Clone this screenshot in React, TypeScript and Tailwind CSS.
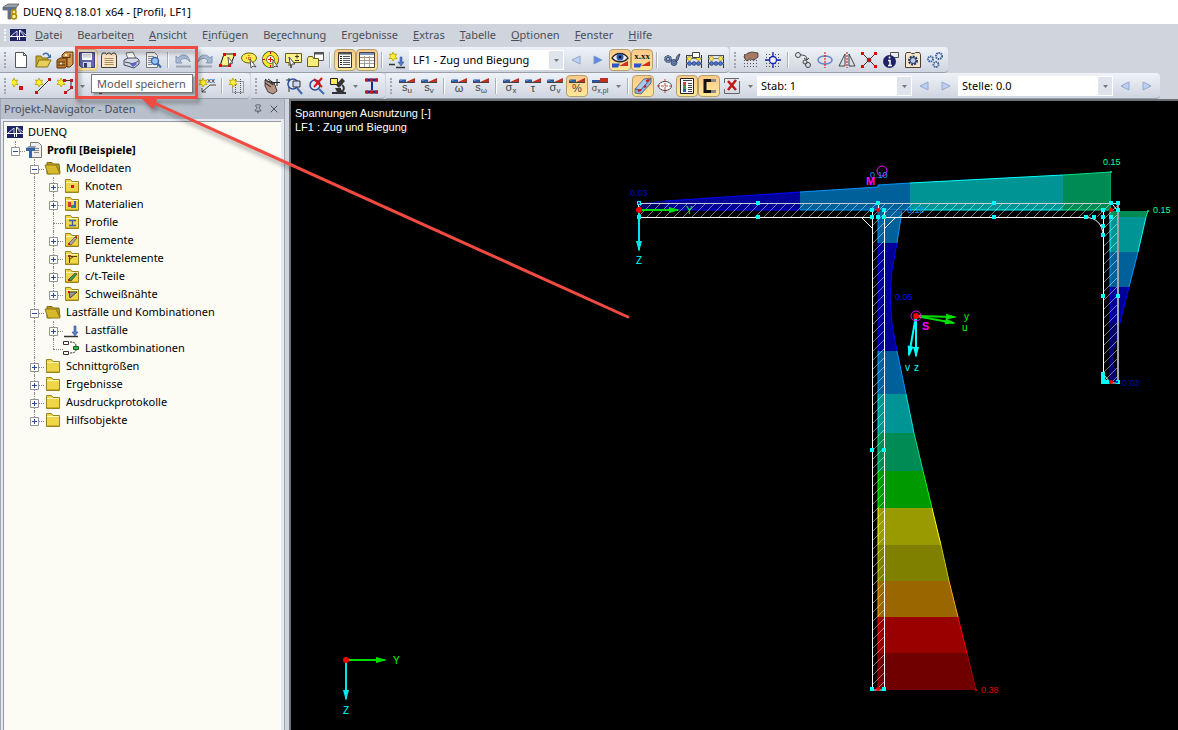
import React from 'react';
import { Pin, X } from 'lucide-react';

const gold = '#efd548';

const spark = (
  <g stroke="#b8a000" fill="#ffee33">
    <path d="M5 1l1 2.5L8.500 3 7.500 5.500 9 7.500 6.500 7.500 5 10 4 7.500 1 7.500 2.500 5.500 1.500 3 4 3.500z" strokeWidth=".8" />
  </g>
);

const slopes = (
  <>
    <path d="M1 2.500h7v3z" fill="#2b57a5" />
    <path d="M1 5.500V3l9 2.500z" fill="#2b57a5" />
    <path d="M7 5.500L17 1v4.500z" fill="#c03020" />
    <path d="M1 5.500h16" stroke="#444" />
  </>
);

function slopeText(text: string) {
  return (
    <>
      {slopes}
      <text x="9" y="15" fontSize="11" textAnchor="middle" fill="#444" fontFamily="Liberation Sans, sans-serif">{text}</text>
    </>
  );
}

function slopeSub(text: string, sub: string) {
  return (
    <>
      {slopes}
      <text x="9" y="14" fontSize="11" textAnchor="middle" fill="#444" fontFamily="Liberation Sans, sans-serif">
        {text}<tspan fontSize="8" dy="2">{sub}</tspan>
      </text>
    </>
  );
}

const dotGrid = (
  <path d="M2 3.500h15M2 6.500h15M2 9.500h15M2 12.500h15M2 15.500h15" stroke="#555" strokeDasharray="1 2" />
);

const beads = (
  <>
    <path d="M1.500 4v13M16.500 4v13" stroke="#333" />
    <path d="M1 7.500h16M1 12.500h16" stroke="#777" />
    <g stroke="#8a7a10" strokeWidth=".5" fill="#ffe84a"><circle cx="4.500" cy="7.500" r="2" /><circle cx="13.500" cy="7.500" r="2" /></g>
    <g stroke="#124" strokeWidth=".5" fill="#4a72d8"><circle cx="4.500" cy="12.500" r="2" /><circle cx="9" cy="12.500" r="2" /><circle cx="13.500" cy="12.500" r="2" /></g>
  </>
);

const icons: Record<string, React.ReactNode> = {
  new: <path d="M3.500 1.500h8l3 3v12h-11z M11.500 1.500v3h3" fill="#fff" stroke="#555" />,
  open: (
    <>
      <path d="M2 16V5h5l1.500 2H14v3" fill="#c8a930" stroke="#84701a" />
      <path d="M2 16l3-7h12l-3.500 7z" fill="#e8cf58" stroke="#84701a" />
      <path d="M9 4c2-3 5-2 6 1" fill="none" stroke="#3b6ea5" strokeWidth="1.500" /><path d="M17 3v4h-4z" fill="#3b6ea5" />
    </>
  ),
  cabinet: (
    <>
      <path d="M1 9l3-2h7v8l-2 2H1z" fill="#b9772c" stroke="#5a3510" />
      <path d="M6 4l3-3h8v12l-3 3h-3V7l-5-1z" fill="#d79a4a" stroke="#5a3510" />
      <path d="M2 11h7M2 14h7M6 6.500h8V3" fill="none" stroke="#5a3510" /><circle cx="5" cy="12.500" r="1" fill="#fff" /><circle cx="10" cy="4" r="1" fill="#fff" />
    </>
  ),
  save: (
    <>
      <path d="M1.500 1.500h15v15h-13l-2-2z" fill="#6468a8" stroke="#3f4380" />
      <path d="M4 2h10v7H4z" fill="#fff" /><path d="M5 4h8M5 6h8" stroke="#b9bccb" />
      <path d="M5 11h8v5.500H5z" fill="#d5d8e6" /><path d="M6 12h3v4.500H6z" fill="#33366b" />
    </>
  ),
  report: (
    <>
      <path d="M1.500 4.500l1-2.500h3l1 1.500L8 2h2l1 1.500L13 2h2l1.500 2.500v12h-15z" fill="#f7e6c8" stroke="#4a3c30" />
      <path d="M4.500 7.500h9M4.500 9.500h9M4.500 11.500h9M4.500 13.500h9" stroke="#b08c5c" />
    </>
  ),
  print: (
    <>
      <path d="M4 2l7-1 3 7H6z" fill="#fff" stroke="#777" />
      <path d="M2 9l4-2h9l2 2v4l-5 4-10-3z" fill="#d6d9e8" stroke="#44485f" />
      <path d="M3 11l9 2 4-3" fill="none" stroke="#44485f" /><path d="M8 13l5-2 2 2-4 3z" fill="#5568c8" />
    </>
  ),
  preview: (
    <>
      <path d="M2.500 1.500h8l3 3v12h-11z" fill="#f4f4f4" stroke="#777" /><path d="M4 5.500h6M4 7.500h6M4 9.500h3M4 11.500h3M4 13.500h4" stroke="#888" />
      <circle cx="11" cy="10" r="3.500" fill="#9cc3ee" stroke="#3c6bb0" strokeWidth="1.500" /><path d="M13.500 12.500l3.500 4" stroke="#3c6bb0" strokeWidth="2" />
    </>
  ),
  undo: <><path d="M4 7c4-5 11-4 12 4-3-4-7-5-10-1l2 2H2V5z" fill="#a6b8d2" stroke="#8598b5" /><path d="M2 15.500h15" stroke="#9ba6b8" strokeWidth="2" /></>,
  redo: <><path d="M14 7C10 2 3 3 2 11c3-4 7-5 10-1l-2 2h6V5z" fill="#a6b8d2" stroke="#8598b5" /><path d="M1 15.500h15" stroke="#9ba6b8" strokeWidth="2" /></>,
  area: <><path d="M6 3h11l-5 12H2z" fill="#faf08c" stroke="#111" /><g fill="#e00"><path d="M5 2h3v3H5zM15 2h3v3h-3zM1 13h3v3H1zM10 13h3v3h-3z" /></g><path d="M10 6l5 6h-3l-1 3z" fill="#fff" stroke="#555" /></>,
  circleArea: <><ellipse cx="9" cy="7" rx="7.500" ry="5" fill="#ffee50" stroke="#665c00" /><path d="M6 7h6M9 4v6" stroke="#e00" strokeDasharray="1 1" /><path d="M10 8l6 8-3-1-2 2z" fill="#fff" stroke="#555" /></>,
  ring: <><circle cx="8.500" cy="8.500" r="6" fill="#fff" stroke="#443f10" strokeWidth="5" /><circle cx="8.500" cy="8.500" r="6" fill="none" stroke="#ffe533" strokeWidth="3.500" /><path d="M6 8.500h5M8.500 6v5M8.500 1v2M1 8.500h2M8.500 14v2" stroke="#e00" /><path d="M11 9l5 7-3-1-2 2z" fill="#fff" stroke="#555" /></>,
  note: <><path d="M1.500 2.500h16v9H8l-3 3v-3H1.500z" fill="#fdf08a" stroke="#665c20" /><path d="M13 3.500v4M11 5.500h4M11 9.500h4" stroke="#333" /><path d="M5 6l6 7H8l-1 4z" fill="#fff" stroke="#444" /></>,
  windows: <><path d="M8.500 1.500h9v8h-9z" fill="#fff" stroke="#555" /><path d="M8 2.500h10" stroke="#555" strokeWidth="2" /><path d="M1.500 7.500l1-2h4l1 2h5v8h-11z" fill="#f7ed78" stroke="#6b5f1e" /></>,
  navigator: <><path d="M2.500 1.500h13v15h-13z" fill="#fff" stroke="#333" /><path d="M2 2.500h14" stroke="#555" strokeWidth="2" /><path d="M7 5.500h7M7 7.500h7M7 9.500h7M7 11.500h7M7 13.500h7" stroke="#555" /><path d="M4 5.500h2M4 7.500h2M4 9.500h2M4 11.500h2M4 13.500h2" stroke="#222" /></>,
  tables: <><path d="M1.500 1.500h15v15h-15z" fill="#fff" stroke="#444" /><path d="M2 3h14" stroke="#7a95c0" strokeWidth="2" /><path d="M2 6.500h14" stroke="#b08c5c" /><path d="M2 9.500h14M2 12.500h14M6.500 5v11M11.500 5v11" stroke="#a0a0a0" /></>,
  newCase: <>{spark}<path d="M8 16.500h9M1 13.500h6" stroke="#333" strokeWidth="1.500" /><path d="M14 6v5h2l-3 4-3-4h2V6z" fill="#5577c8" stroke="#2b4a90" strokeWidth=".5" /></>,
  prev: <path d="M13 5v8L5 9z" fill="#bcd0f6" stroke="#93a8cc" />,
  next: <path d="M5 5v8l8-4z" fill="#bcd0f6" stroke="#93a8cc" />,
  nextBlue: <path d="M5 5v8l8-4z" fill="#5d8ae0" stroke="#7f9bcc" />,
  eye: <><path d="M1 12.500h8l-2 4H1z" fill="#2b57c5" /><path d="M8 15l9-5v5z" fill="#d03020" /><path d="M1 7c4-6 12-6 16 0-4 5-12 5-16 0z" fill="#eef" stroke="#222" strokeWidth="1.300" /><circle cx="9" cy="6" r="3.500" fill="#2a57a8" /><circle cx="9" cy="6" r="1.300" fill="#001" /></>,
  values: <><text x="9" y="8" textAnchor="middle" fontSize="9" fontWeight="bold" fontFamily="Liberation Serif, serif" fill="#111">x.xx</text><path d="M1 12.500h8l-2 4H1z" fill="#2b57c5" /><path d="M8 15l9-5v5z" fill="#d03020" /></>,
  gears: <g fill="#6c86b8" stroke="#25304a" strokeWidth=".8"><circle cx="5" cy="8" r="3.500" strokeDasharray="2 1" /><circle cx="5" cy="8" r="1.500" fill="#dde" /><circle cx="11" cy="11.500" r="3" /><circle cx="11" cy="11.500" r="1" fill="#dde" /><path d="M13 11c0-5 1-7 4-8l-2 6z" /></g>,
  abacusDoc: <>{beads}<path d="M7.500 1.500h7v5h-7z" fill="#fff" stroke="#444" /><path d="M1 4.500h6" stroke="#444" /></>,
  abacus: <>{beads}<path d="M1 4.500h16" stroke="#555" /></>,
  handGrid: <>{dotGrid}<path d="M2 5l4-3 4-1 6 1v4l-4 3-4-1-3 2-2-2z" fill="#a67a62" stroke="#333" strokeWidth=".8" /></>,
  snapGrid: <>{dotGrid}<path d="M9 1v16M1 9h16" stroke="#1522b0" strokeWidth="1.300" /><circle cx="9" cy="9" r="3.500" fill="#eef" stroke="#1522b0" strokeWidth="1.300" /></>,
  moveNode: <g fill="none" stroke="#444"><circle cx="4" cy="4" r="2.500" /><circle cx="14" cy="14" r="2.500" /><circle cx="11" cy="11" r="2" /><path d="M7 4c5 0 6 2 6 5l2-2m-2 2l-3-2" /></g>,
  rotate: <><ellipse cx="9" cy="9" rx="7" ry="4" fill="none" stroke="#6288c8" strokeWidth="1.500" /><path d="M9 1v16" stroke="#d00" strokeDasharray="2 1" /></>,
  mirror: <><path d="M7 3v12H1zM11 3v12h6z" fill="none" stroke="#444" /><path d="M9 1v16" stroke="#d00" strokeDasharray="2 1" /></>,
  cross: <><path d="M2 2l14 14M16 2L2 16" stroke="#333" /><g fill="#e00"><path d="M1 1h3v3H1zM14 1h3v3h-3zM1 14h3v3H1zM14 14h3v3h-3z" /><circle cx="9" cy="9" r="2" stroke="#333" strokeWidth=".6" /></g></>,
  info: <><path d="M8.500 1.500h8v5h-8z" fill="#eee" stroke="#555" /><circle cx="7.500" cy="10.500" r="6.500" fill="#1c2466" /><path d="M6 9.500h2V14M6 14.500h4" fill="none" stroke="#fff" strokeWidth="1.500" /><circle cx="7.500" cy="6.500" r="1" fill="#fff" /></>,
  calcGear: <><path d="M1.500 3.500l1-2h4l1 1h3l1-1h4l1 2v13h-15z" fill="#f7e6c8" stroke="#4a3c30" /><circle cx="9" cy="9.500" r="4" fill="none" stroke="#1f3568" strokeWidth="2" strokeDasharray="2 1" /><circle cx="9" cy="9.500" r="3" fill="#b9cbe8" stroke="#1f3568" /></>,
  cogs: <g fill="#dfe7f4" stroke="#41639c" strokeWidth="2" strokeDasharray="1.500 .7"><circle cx="4.500" cy="8" r="2.500" /><circle cx="13" cy="5" r="3" /><circle cx="10" cy="13.500" r="2.500" /></g>,
  node: <g transform="translate(-3 0)">{spark}<path d="M10 9h4v4h-4z" fill="#c01818" /></g>,
  line: <><path d="M3 15L15 3" stroke="#333" />{spark}<path d="M1 14h3v3H1zM14 1h3v3h-3z" fill="#c01818" /></>,
  poly: <><path d="M6 3.500h9v8l-6 4" stroke="#333" fill="none" />{spark}<path d="M14 2h3v3h-3zM14 9h3v3h-3zM8 14h3v3H8zM7 2h3v3H7z" fill="#c01818" /></>,
  profileNew: <><path d="M3 15V5h12" fill="none" stroke="#333" />{spark}<path d="M12 12h4v4h-4z" fill="#1b2a90" /></>,
  support: <><path d="M3 15h13M5 15l4-9 4 9" fill="none" stroke="#333" /><path d="M7 12h4v4H7z" fill="#1b2a90" /></>,
  dimension: <><path d="M4 15l8-7h6M4 15v-4M4 15h4" stroke="#444" fill="none" />{spark}<text x="9" y="6" fontSize="8" fill="#222" fontFamily="Liberation Sans, sans-serif">xx</text></>,
  dottedFrame: <><path d="M4.500 4.500h11v11h-11zM7.500 2v15M12.500 2v15" fill="none" stroke="#555" strokeDasharray="1 1" />{spark}</>,
  pan: <><path d="M2 3l3 2 1-1 6 4 2 6-4 3-5-2-3-6z" fill="#b59482" stroke="#222" strokeWidth=".8" /><path d="M2 2l8 6M5 2l7 5M2 6l6 4M8 5.500h9M14 2v7" stroke="#222" /></>,
  zoomWin: <><path d="M1 3h7M4 1v14" stroke="#333" /><circle cx="8" cy="7" r="5" fill="#dce9ff" stroke="#2a4a98" strokeWidth="1.500" /><path d="M8 4h7v6H8z" fill="#cdd8f0" stroke="#333" /><path d="M12 11l5 6" stroke="#3c6bb0" strokeWidth="2" /></>,
  zoomOff: <><circle cx="8" cy="8" r="5" fill="#dce9ff" stroke="#2a4a98" strokeWidth="1.500" /><path d="M12 12l5 5" stroke="#3c6bb0" strokeWidth="2" /><path d="M7 2l8 8M15 1l-8 9" stroke="#d01818" strokeWidth="2" /></>,
  microscope: <><path d="M1.500 1.500h7v6h-7z" fill="#ffee50" stroke="#222" /><path d="M13 1l3 3-6 7-3-3zM3 15h14v2H3zM6 11h6v1l2 3H8z" fill="#333" /><path d="M13 8c3 2 2 5 0 7" fill="none" stroke="#333" strokeWidth="2" /></>,
  iProfile: <><path d="M3 3h12M3 15h12" stroke="#1b2a90" strokeWidth="3" /><path d="M2 3h14M2 15h14" stroke="#c01818" strokeWidth="3" strokeDasharray="3 2" /><path d="M8 5h2v8H8z" fill="#1b2a90" /></>,
  su: slopeSub('s', 'u'),
  sv: slopeSub('s', 'v'),
  omega: slopeText('ω'),
  somega: slopeSub('s', 'ω'),
  sigmaX: slopeSub('σ', 'x'),
  tau: slopeText('τ'),
  sigmaV: slopeSub('σ', 'v'),
  percent: slopeText('%'),
  sigmaPl: (
    <>
      <path d="M1 3h8v3H1z" fill="#2b57a5" /><path d="M9 1h8v4H9z" fill="#c03020" /><path d="M1 5.500h16" stroke="#444" />
      <text x="9" y="14" fontSize="9" textAnchor="middle" fill="#444" fontFamily="Liberation Sans, sans-serif">σ<tspan fontSize="7" dy="2">x,pl</tspan></text>
    </>
  ),
  section: <><path d="M1 12L10 2l7-1-10 12z" fill="#a8c8ef" stroke="#456" strokeWidth=".8" /><path d="M1 12l6 1L17 1v5L7 17l-6-1z" fill="#8db2e4" stroke="#456" strokeWidth=".8" /><path d="M4 14l3-1M12 4l3-1M10 10l2-1" stroke="#d01818" strokeWidth="2" /></>,
  ellipse: <><ellipse cx="9" cy="9" rx="6.500" ry="4.500" fill="#fff" stroke="#444" /><path d="M9 2v14M1 9h16" stroke="#b44" strokeDasharray="3 1" /></>,
  legend: <><path d="M2.500 1.500h13v15h-13z" fill="#fff" stroke="#222" /><path d="M5 5h3v3H5z" fill="#e04030" /><path d="M5 8h3v4H5z" fill="#3c9a46" /><path d="M5 12h3v3H5z" fill="#2b57c5" /><path d="M5 3.500h9M10 6.500h4M10 8.500h4M10 10.500h4M10 12.500h4M10 14.500h4" stroke="#444" /></>,
  cShape: <><path d="M11 3.500H5v11h6" fill="none" stroke="#111" strokeWidth="3" /><path d="M11 3.500h5M11 14.500h5" stroke="#888" strokeWidth="3" /></>,
  clear: <><path d="M1.500 6V1.500H16M1.500 12v4.500H16.500V4" fill="none" stroke="#666" /><path d="M5 4l8 9M13 3L5 13" stroke="#c01818" strokeWidth="2.500" /></>,
};

function Tool({ icon, label, active, hover, wide }: { icon: string; label: string; active?: boolean; hover?: boolean; wide?: boolean }) {
  let look = 'border-transparent';
  if (active) look = 'border-[#b5a06a] bg-gradient-to-b from-[#ffc98a] to-[#ffe89a]';
  if (hover) look = 'border-[#d8c48c] bg-gradient-to-b from-[#fdf6e4] to-[#fbe08a]';
  return (
    <button type="button" aria-label={label} className={`flex h-[22px] shrink-0 items-center justify-center rounded-sm border ${wide ? 'w-6' : 'w-[22px]'} ${look}`}>
      <svg viewBox="0 0 18 18" className="h-[18px] w-[18px] shrink-0">{icons[icon]}</svg>
    </button>
  );
}

function Drop({ label }: { label: string }) {
  return (
    <button type="button" aria-label={label} className="flex h-[22px] w-3 shrink-0 items-center justify-center">
      <svg viewBox="0 0 5 3" className="h-[3px] w-[5px]"><path d="M0 0h5L2.500 3z" fill="#777" /></svg>
    </button>
  );
}

const Sep = () => <span className="mx-[3px] h-4 w-[2px] shrink-0 border-l border-[#a9afbc] bg-white" />;

function Band({ children }: { children: React.ReactNode }) {
  return (
    <div className="mr-px flex h-[26px] shrink-0 items-center rounded-r border-b border-[#9a9fac] bg-gradient-to-b from-[#eff2f8] to-[#cfd5e0] pr-[2px] pt-px">
      <span className="ml-1 mr-1 h-4 w-[2px] border-l-2 border-dotted border-[#a0a6b3]" />
      {children}
    </div>
  );
}

function Combo({ label, value, width }: { label: string; value: string; width: string }) {
  return (
    <label className={`relative mx-px flex h-[20px] shrink-0 ${width}`}>
      <select aria-label={label} className="h-full w-full appearance-none rounded-none bg-white pl-1 text-[11px] text-black">
        <option>{value}</option>
      </select>
      <span className="pointer-events-none absolute inset-y-px right-px flex w-[14px] items-center justify-center bg-[#dfe3ec]">
        <svg viewBox="0 0 5 3" className="h-[3px] w-[5px]"><path d="M0 0h5L2.500 3z" fill="#777" /></svg>
      </span>
    </label>
  );
}

const menu = [
  ['', 'D', 'atei'],
  ['Bearbeite', 'n', ''],
  ['', 'A', 'nsicht'],
  ['E', 'i', 'nfügen'],
  ['Be', 'r', 'echnung'],
  ['Er', 'g', 'ebnisse'],
  ['', 'E', 'xtras'],
  ['', 'T', 'abelle'],
  ['', 'O', 'ptionen'],
  ['', 'F', 'enster'],
  ['', 'H', 'ilfe'],
];

const folder = (
  <>
    <path d="M2.500 4V2.500h5L9 4.500h6.500v11h-13z" fill={gold} stroke="#9a8422" />
    <path d="M3 5.500h12" stroke="#fff6b8" />
    <path d="M3 14.500h12" stroke="#d0b028" />
  </>
);

const treeIcons: Record<string, React.ReactNode> = {
  logo: <><path d="M1 3h16v12H1z" fill="#1d2567" /><path d="M1 10.500h16M10.500 4v10M8.500 10v4" stroke="#fff" /><path d="M2 10l6-5v5M11 4l6 5M11 5l4 5" fill="none" stroke="#fff" strokeWidth=".8" /></>,
  doc: <><path d="M5.500 1.500h8l3 3v12h-11z" fill="#eee" stroke="#777" /><path d="M9 7.500h5M9 9.500h5M9 11.500h5" stroke="#888" /><path d="M1 7h9v3H7v7H4v-7H1z" fill="#3565a5" /><path d="M1 7l3-2h7l-1 2" fill="#8899b0" /></>,
  open: <><path d="M3 15V3.500h5L9.500 5H15l1 9z" fill="#b8981e" stroke="#7d6813" /><path d="M1 6h11l4 9H4z" fill="#d8b92e" stroke="#8f7818" /></>,
  closed: folder,
  knoten: <>{folder}<path d="M8 8h3v3H8z" fill="#d01818" /></>,
  material: <>{folder}<path d="M5 7h3v5H5z" fill="#d33" /><path d="M8 10h3v3H8z" fill="#2b9a3a" /><path d="M11 6h2v7h-2z" fill="#3a62c8" /></>,
  profile: <>{folder}<path d="M6 7.500h7M6 12.500h7M9.500 7v6" stroke="#3a5ea8" strokeWidth="1.300" /></>,
  element: <>{folder}<path d="M5 13l7-7 2 1-6 7z" fill="#aaa" stroke="#555" strokeWidth=".8" /><path d="M5 13h2M12 6h2" stroke="#d00" strokeWidth="1.500" /></>,
  punkt: <>{folder}<path d="M6.500 14V7.500H14M6.500 10.500l4-3" fill="none" stroke="#5a3a10" /><path d="M5 6h3v2H5z" fill="#a33" /></>,
  ct: <>{folder}<path d="M5 13l7-7 2 1-6 7z" fill="#3c9a46" stroke="#444" strokeWidth=".8" /><path d="M5 13h2" stroke="#d00" strokeWidth="1.500" /></>,
  naht: <>{folder}<path d="M6 7h8l-7 6z" fill="#999" stroke="#222" strokeWidth=".8" /><path d="M5 6h2v2H5z" fill="#d00" /></>,
  load: <><path d="M1 15.500h14" stroke="#333" strokeWidth="1.500" /><path d="M11 5h2v6h2l-3 4-3-4h2z" fill="#5d80c8" stroke="#2b4a90" strokeWidth=".6" /></>,
  combi: <><path d="M.5 2.500h5v3h-5zM.5 12.500h5v3h-5z" fill="#fff" stroke="#333" /><path d="M7 3c4 0 6 1 6 4M7 14c4 0 6-1 6-3" fill="none" stroke="#333" strokeDasharray="2 1" /><path d="M10.500 7.500h5v3h-5z" fill="#2fc24a" stroke="#175c22" /></>,
};

type Row = { name: string; icon: string; level: number; box?: '+' | '-'; last?: boolean };

const rows: Row[] = [
  { name: 'DUENQ', icon: 'logo', level: 0 },
  { name: 'Profil [Beispiele]', icon: 'doc', level: 1, box: '-', last: true },
  { name: 'Modelldaten', icon: 'open', level: 2, box: '-' },
  { name: 'Knoten', icon: 'knoten', level: 3, box: '+' },
  { name: 'Materialien', icon: 'material', level: 3, box: '+' },
  { name: 'Profile', icon: 'profile', level: 3 },
  { name: 'Elemente', icon: 'element', level: 3, box: '+' },
  { name: 'Punktelemente', icon: 'punkt', level: 3, box: '+' },
  { name: 'c/t-Teile', icon: 'ct', level: 3, box: '+' },
  { name: 'Schweißnähte', icon: 'naht', level: 3, box: '+', last: true },
  { name: 'Lastfälle und Kombinationen', icon: 'open', level: 2, box: '-' },
  { name: 'Lastfälle', icon: 'load', level: 3, box: '+' },
  { name: 'Lastkombinationen', icon: 'combi', level: 3, last: true },
  { name: 'Schnittgrößen', icon: 'closed', level: 2, box: '+' },
  { name: 'Ergebnisse', icon: 'closed', level: 2, box: '+' },
  { name: 'Ausdruckprotokolle', icon: 'closed', level: 2, box: '+' },
  { name: 'Hilfsobjekte', icon: 'closed', level: 2, box: '+', last: true },
];

function TreeRow({ row }: { row: Row }) {
  return (
    <li className="flex h-[18px] items-center whitespace-nowrap">
      {row.level > 1 && <span className="h-full w-[19px]" />}
      {row.level > 2 && <span className="flex h-full w-[19px] pl-[9px]"><span className="border-l border-dotted border-[#888]" /></span>}
      {row.level > 0 && (
        <span className="relative flex h-full w-[19px] items-center justify-center pt-[2px]">
          <span className={`absolute left-[9px] top-0 border-l border-dotted border-[#888] ${row.last ? 'h-[10px]' : 'h-full'}`} />
          <span className="absolute left-[9px] right-0 top-[10px] border-t border-dotted border-[#888]" />
          {row.box && (
            <button type="button" aria-label={`${row.name} ${row.box === '+' ? 'öffnen' : 'schließen'}`} className="relative">
              <svg viewBox="0 0 9 9" className="h-[9px] w-[9px]">
                <path d="M.5.5h8v8h-8z" fill="#fff" stroke="#8f949c" />
                <path d={row.box === '+' ? 'M2 4.500h5M4.500 2v5' : 'M2 4.500h5'} stroke="#2a4a98" />
              </svg>
            </button>
          )}
        </span>
      )}
      <svg viewBox="0 0 18 18" className="mr-1 h-[18px] w-[18px] shrink-0">{treeIcons[row.icon]}</svg>
      <span className={row.level === 1 ? 'font-bold' : ''}>{row.name}</span>
    </li>
  );
}

const webZones = [
  ['878,211 902,211 897,243 878,243', '#006099', '#0095ff'],
  ['878,243 897,243 892,270 890,297 892,324 897,351 878,351', '#000099', '#0000ff'],
  ['878,351 897,351 906,394 878,394', '#006099', '#0095ff'],
  ['878,394 906,394 914,433 878,433', '#009494', '#00e5e5'],
  ['878,433 914,433 923,471 878,471', '#008b55', '#00e08a'],
  ['878,471 923,471 932,508 878,508', '#009900', '#00ff00'],
  ['878,508 932,508 941,545 878,545', '#999900', '#ffff00'],
  ['878,545 941,545 949,581 878,581', '#808000', '#c8c800'],
  ['878,581 949,581 958,617 878,617', '#996600', '#ffa500'],
  ['878,617 958,617 967,653 878,653', '#990000', '#ff0000'],
  ['878,653 967,653 976,690 878,690', '#700000', '#a80000'],
];

const flangeZones = [
  ['639,204 665,201 665,210 639,210', '#000066', '#0000b0'],
  ['665,201 800,192 800,210 665,210', '#000099', '#0000ff'],
  ['800,192 878,187 878,185 910,183 910,210 800,210', '#006099', '#0095ff'],
  ['910,183 1063,175 1063,210 910,210', '#009494', '#00ffff'],
  ['1063,175 1111,172 1111,210 1063,210', '#008b55', '#00e08a'],
];

const legZones = [
  ['1110,211 1148,211 1146,217 1110,217', '#008b55', '#00e08a'],
  ['1110,217 1146,217 1138,252 1110,252', '#009494', '#00ffff'],
  ['1110,252 1138,252 1129,287 1110,287', '#006099', '#0095ff'],
  ['1110,287 1129,287 1120,323 1110,323', '#000099', '#0000ff'],
  ['1110,323 1120,323 1112,357 1117,383 1110,383', '#000066', '#0000a0'],
];

const grips = [
  [639, 203], [639, 217], [758, 203], [758, 217], [878, 203], [872, 210], [884, 210], [872, 217], [878, 217], [884, 217],
  [994, 203], [994, 217], [1086, 217], [1094, 217], [1111, 203], [1118, 203], [1118, 210], [1103, 210], [1103, 217], [1111, 217],
  [1103, 226], [1103, 235], [1103, 296], [1118, 296], [1103, 374], [1103, 378], [1103, 382], [1107, 382], [1118, 382],
  [872, 450], [884, 450], [872, 689], [884, 689],
];

function Arrow({ x1, y1, x2, y2, color }: { x1: number; y1: number; x2: number; y2: number; color: string }) {
  const a = (Math.atan2(y2 - y1, x2 - x1) * 180) / Math.PI;
  return (
    <g fill={color} stroke={color}>
      <line x1={x1} y1={y1} x2={x2} y2={y2} strokeWidth="2" />
      <path d="M2 0l-11-3v6z" stroke="none" transform={`translate(${x2} ${y2}) rotate(${a})`} />
    </g>
  );
}

function Drawing() {
  return (
    <svg viewBox="291 101 887 629" className="h-[629px] w-[887px] shrink-0 text-[9px]" fontFamily="Liberation Sans, sans-serif">
      <defs>
        <pattern id="hatch" width="9" height="9" patternUnits="userSpaceOnUse">
          <path d="M0 9L9 0M-1 1l2-2M8 10l2-2" stroke="#fff" strokeOpacity=".6" strokeWidth=".8" />
        </pattern>
      </defs>
      {[...flangeZones, ...webZones, ...legZones].map(([points, fill, line]) => {
        const p = points.split(' ');
        const top = flangeZones.some((z) => z[0] === points);
        const edge = top ? p.slice(0, -2) : p.slice(1, -1);
        const base = top ? p.slice(-2) : [p[0], p[p.length - 1]];
        return (
          <g key={points}>
            <polygon points={points} fill={fill} />
            <polyline points={edge.join(' ')} fill="none" stroke={line} />
            <polyline points={base.join(' ')} fill="none" stroke={line} />
          </g>
        );
      })}
      <path d="M1110.500 172v39" stroke="#00a065" />
      <path d="M639 203h479v14H639zM872 217h12v473h-12zM1103 217h15v166h-15z" fill="url(#hatch)" />
      <g fill="none" stroke="#fff">
        <path d="M638.500 203v14.500H872" />
        <path d="M884 217.500h202" />
        <path d="M639 203.500h479" stroke="#c4ccd8" />
        <path d="M872.500 210v480h12V210M878.500 203v8M862 218l10 10M895 218l-10 10" />
        <path d="M1103.500 211v172h15M1086 217.500c10 0 17 7 17 18M1103 374l7 8" />
        <path d="M1118 203v180" stroke="#a0a0a8" strokeWidth="2" />
        <path d="M1113 205l4 5" />
      </g>
      {grips.map(([x, y]) => <rect key={`${x}-${y}`} x={x - 2} y={y - 2} width="4" height="4" fill="#00ffff" />)}

      <Arrow x1={639} y1={210} x2={678} y2={210} color="#00dd00" />
      <Arrow x1={639} y1={210} x2={639} y2={250} color="#00e5ee" />
      <Arrow x1={346} y1={660} x2={385} y2={660} color="#00e000" />
      <Arrow x1={346} y1={660} x2={346} y2={699} color="#00e5ee" />
      <Arrow x1={916} y1={316} x2={955} y2={317} color="#00e000" />
      <Arrow x1={916} y1={316} x2={954} y2={323} color="#00e000" />
      <Arrow x1={916} y1={316} x2={916} y2={356} color="#00ffff" />
      <Arrow x1={916} y1={316} x2={909} y2={355} color="#00ffff" />

      <g fill="none" stroke="#ff00ff">
        <circle cx="882" cy="171" r="5" />
        <circle cx="916" cy="316" r="5" />
      </g>
      <g fill="#f00000">
        <circle cx="639" cy="210" r="3" />
        <circle cx="346" cy="660" r="3" />
        <circle cx="916" cy="316" r="3" />
        <circle cx="878" cy="210" r="2" />
        <circle cx="1111" cy="210" r="2" />
        <circle cx="1111" cy="382" r="2" />
        <circle cx="878" cy="689" r="2" />
        <circle cx="976" cy="690" r="1" />
      </g>
      <g fill="#0000c0">
        <circle cx="639" cy="203" r="1" />
        <circle cx="890" cy="297" r="1" />
        <circle cx="1117" cy="382" r="1" />
      </g>
      <g fill="#00e08a">
        <circle cx="1111" cy="172" r="1" />
        <circle cx="1148" cy="211" r="1" />
      </g>

      <g fill="#0000d0">
        <text x="630" y="196">0.03</text>
        <text x="895" y="300" fill="#0000ff">0.05</text>
        <text x="1122" y="386" fill="#0000b8">0.03</text>
      </g>
      <g fill="#0095ff">
        <text x="870" y="178">0.10</text>
        <text x="907" y="213">0.10</text>
      </g>
      <g fill="#00ff9d">
        <text x="1103" y="165">0.15</text>
        <text x="1153" y="213">0.15</text>
      </g>
      <text x="981" y="693" fill="#e00000">0.38</text>
      <g fill="#ff00ff" className="text-[11px] font-bold">
        <text x="866" y="185">M</text>
        <text x="922" y="330">S</text>
      </g>
      <g fill="#00ff00" className="text-[10px]">
        <text x="686" y="214">Y</text>
        <text x="393" y="664">Y</text>
        <text x="964" y="320">y</text>
        <text x="962" y="331">u</text>
      </g>
      <g fill="#00ffff" className="text-[10px]">
        <text x="636" y="264">Z</text>
        <text x="343" y="714">Z</text>
        <text x="905" y="371">v</text>
        <text x="914" y="371">z</text>
      </g>
    </svg>
  );
}

export default function App() {
  return (
    <div className="relative flex h-screen flex-col overflow-hidden bg-[#cfd4dd] font-['Noto_Sans','Open_Sans',sans-serif] text-[11px] leading-4 text-black">
      <header className="flex h-6 shrink-0 items-center bg-white pl-[2px]">
        <svg viewBox="0 0 18 18" className="mr-[3px] h-[18px] w-[18px]">
          <path d="M1 4l5-3h11l-3 4v2H9v9H6V7H1z" fill="#9aa0a8" stroke="#555" strokeWidth=".7" />
          <path d="M1 4h13v3H9v9H6V7H1z" fill="#5f7184" />
          <circle cx="12" cy="9" r="2" fill="#fff3a0" stroke="#b88a00" strokeWidth="1.500" />
          <circle cx="12" cy="13.500" r="2.500" fill="#fff3a0" stroke="#b88a00" strokeWidth="1.500" />
        </svg>
        <h1>DUENQ 8.18.01 x64 - [Profil, LF1]</h1>
      </header>

      <nav className="flex h-[23px] shrink-0 items-center pb-px text-[#4a4f5a]">
        <span className="ml-1 mr-[3px] h-3 border-l-2 border-dotted border-[#f4f6fa]" />
        <svg viewBox="0 0 18 18" className="mr-2 h-[18px] w-[18px]">{treeIcons.logo}</svg>
        <div className="flex gap-[15px]">
          {menu.map(([a, b, c]) => (
            <button type="button" key={a + b + c}>{a}<u>{b}</u>{c}</button>
          ))}
        </div>
      </nav>

      <div className="flex h-[26px] shrink-0">
        <Band>
          <Tool icon="new" label="Neu" />
          <Tool icon="open" label="Öffnen" />
          <Tool icon="cabinet" label="Projektmanager" />
          <Tool icon="save" label="Modell speichern" hover />
          <Tool icon="report" label="Ausdruckprotokoll" />
          <Tool icon="print" label="Drucken" />
          <Tool icon="preview" label="Vorschau" />
          <Sep />
          <Tool icon="undo" label="Rückgängig" />
          <Tool icon="redo" label="Wiederherstellen" />
          <Tool icon="area" label="Fläche wählen" />
          <Tool icon="circleArea" label="Ellipse wählen" />
          <Tool icon="ring" label="Kreisring wählen" />
          <Tool icon="note" label="Auswahl" />
          <Tool icon="windows" label="Fenster" />
          <Sep />
          <Tool icon="navigator" label="Navigator" active />
          <Tool icon="tables" label="Tabellen" active />
          <Sep />
          <Tool icon="newCase" label="Neuer Lastfall" />
          <Combo label="Lastfall" value="LF1 - Zug und Biegung" width="w-[155px]" />
          <Tool icon="prev" label="Voriger Lastfall" />
          <Tool icon="nextBlue" label="Nächster Lastfall" />
          <Tool icon="eye" label="Ergebnisse zeigen" active />
          <Tool icon="values" label="Werte zeigen" active />
          <Sep />
          <Tool icon="gears" label="Berechnen" />
          <Tool icon="abacusDoc" label="Alles berechnen" />
          <Tool icon="abacus" label="Berechnungsparameter" />
        </Band>
        <Band>
          <Tool icon="handGrid" label="Raster verschieben" />
          <Tool icon="snapGrid" label="Fangraster" />
          <Sep />
          <Tool icon="moveNode" label="Verschieben" />
          <Tool icon="rotate" label="Drehen" />
          <Tool icon="mirror" label="Spiegeln" />
          <Tool icon="cross" label="Verbinden" />
          <Tool icon="info" label="Info" />
          <Tool icon="calcGear" label="Einstellungen" />
          <Tool icon="cogs" label="Optionen" />
        </Band>
      </div>

      <div className="flex h-[26px] shrink-0">
        <Band>
          <Tool icon="node" label="Neuer Knoten" />
          <Tool icon="line" label="Neue Linie" />
          <Tool icon="poly" label="Neue Polylinie" />
          <Drop label="Weitere Linien" />
          <Sep />
          <Tool icon="line" label="Neues Element" />
          <Tool icon="profileNew" label="Neues Profil" />
          <Tool icon="support" label="Neues Punktelement" />
          <Tool icon="node" label="Neue Schweißnaht" />
          <Drop label="Weitere Elemente" />
          <Tool icon="dimension" label="Neue Bemaßung" />
          <Sep />
          <Tool icon="dottedFrame" label="Rahmen" />
        </Band>
        <Band>
          <Tool icon="pan" label="Ansicht verschieben" />
          <Tool icon="zoomWin" label="Zoom Fenster" />
          <Tool icon="zoomOff" label="Zoom zurück" />
          <Tool icon="microscope" label="Ansicht" />
          <Drop label="Weitere Ansichten" />
          <Tool icon="iProfile" label="Profil zeigen" />
        </Band>
        <Band>
          <Tool icon="su" label="Statisches Moment Su" />
          <Tool icon="sv" label="Statisches Moment Sv" />
          <Sep />
          <Tool icon="omega" label="Verwölbung" />
          <Tool icon="somega" label="Wölbmoment" />
          <Sep />
          <Tool icon="sigmaX" label="Normalspannung" />
          <Tool icon="tau" label="Schubspannung" />
          <Tool icon="sigmaV" label="Vergleichsspannung" />
          <Tool icon="percent" label="Ausnutzung" active />
          <Tool icon="sigmaPl" label="Plastische Spannung" wide />
          <Drop label="Weitere Spannungen" />
          <Sep />
          <Tool icon="section" label="Querschnitt" active />
          <Tool icon="ellipse" label="Trägheitsellipse" />
          <Tool icon="legend" label="Legende" active />
          <Tool icon="cShape" label="Umriss" active />
          <Tool icon="clear" label="Ausblenden" wide />
          <Drop label="Weitere Filter" />
          <Combo label="Stab" value="Stab: 1" width="w-[155px]" />
          <Tool icon="prev" label="Voriger Stab" />
          <Tool icon="next" label="Nächster Stab" />
          <Combo label="Stelle" value="Stelle: 0.0" width="w-[155px]" />
          <Tool icon="prev" label="Vorige Stelle" />
          <Tool icon="next" label="Nächste Stelle" />
        </Band>
      </div>

      <div className="flex min-h-0 flex-1">
        <aside className="mr-1 flex w-[285px] shrink-0 flex-col border-l border-r border-[#a2a7b2] bg-[#e4e9f3]">
          <div className="flex h-[20px] shrink-0 items-center bg-[#b8c0cb] pl-[3px] text-[#4a4f5a]">
            <h2 className="flex-1">Projekt-Navigator - Daten</h2>
            <button type="button" aria-label="Anheften" className="mr-[5px]"><Pin className="h-[10px] w-[10px]" /></button>
            <button type="button" aria-label="Schließen" className="mr-1"><X className="h-3 w-3" /></button>
          </div>
          <ul className="ml-[2px] mr-[3px] mt-[2px] flex-1 border-l border-t border-[#94989f] bg-[#fcfcf4] pl-[2px] pt-px">
            {rows.map((row) => <TreeRow key={row.name + row.level} row={row} />)}
          </ul>
        </aside>

        <main className="relative min-w-0 flex-1 overflow-hidden border-l-2 border-t-2 border-[#6f7277] bg-black">
          <div className="absolute left-1 top-[5px] font-['Liberation_Sans',sans-serif] leading-[14px] text-white">
            <p>Spannungen Ausnutzung [-]</p>
            <p>LF1 : Zug und Biegung</p>
          </div>
          <Drawing />
        </main>
      </div>

      <div role="tooltip" className="absolute left-[91px] top-[74px] flex h-[19px] w-[102px] items-center border border-[#777] bg-white pl-[5px] text-[#575757] shadow-[2px_2px_2px_rgba(0,0,0,0.35)]">
        Modell speichern
      </div>
      <svg viewBox="0 0 660 340" className="pointer-events-none absolute left-0 top-0 h-[340px] w-[660px] drop-shadow-[2px_4px_2px_rgba(0,0,0,0.35)]">
        <rect x="76.500" y="47.500" width="120" height="50" fill="none" stroke="#f04a41" strokeWidth="3" />
        <path d="M152 102L628 317" stroke="#f04a41" strokeWidth="3" strokeLinecap="round" />
        <path d="M140 97h18l-5 12z" fill="#f04a41" />
      </svg>
    </div>
  );
}
